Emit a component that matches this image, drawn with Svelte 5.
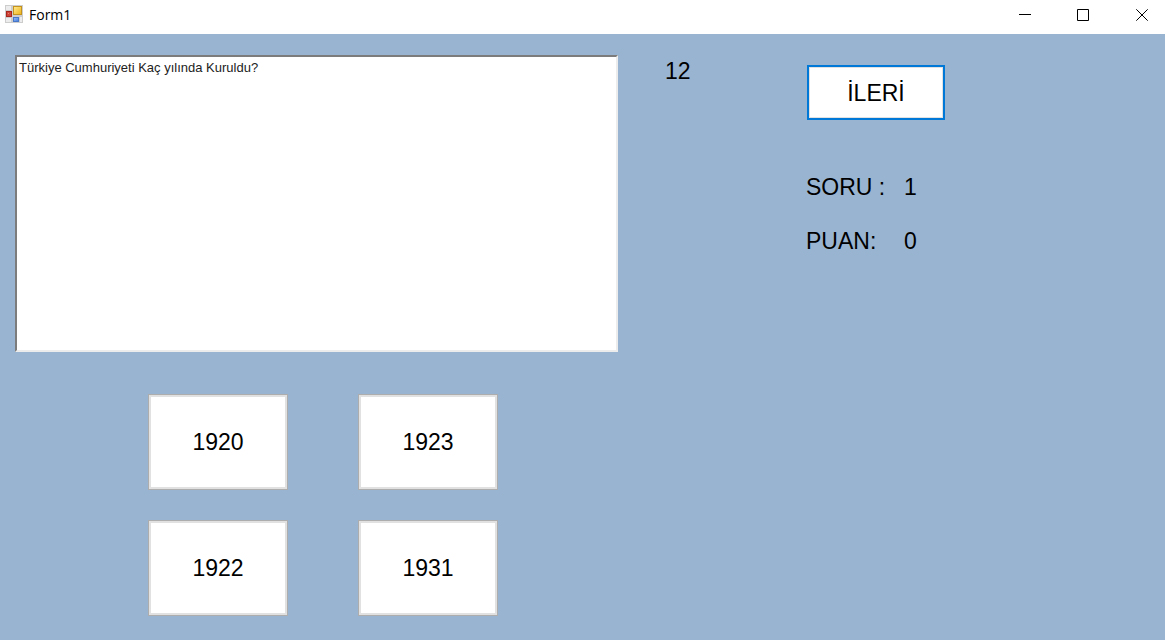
<script>
  let question = $state('Türkiye Cumhuriyeti Kaç yılında Kuruldu?');
  const answers = ['1920', '1923', '1922', '1931'];
  const remaining = 12;
  const number = 1;
  const score = 0;
</script>

<div class="window">
  <header class="titlebar">
    <svg class="app-icon" width="18" height="18" viewBox="0 0 18 18" aria-hidden="true">
      <defs>
        <linearGradient id="gold" x1="0" y1="0" x2="1" y2="1">
          <stop offset="0" stop-color="#ffe88a" />
          <stop offset="1" stop-color="#efb61d" />
        </linearGradient>
        <linearGradient id="blue" x1="0" y1="0" x2="1" y2="1">
          <stop offset="0" stop-color="#8fb9f7" />
          <stop offset="1" stop-color="#4a80e0" />
        </linearGradient>
      </defs>
      <rect x="0" y="0" width="18" height="18" fill="#cdcdcd" />
      <rect x="1" y="1" width="5" height="4" fill="#ececec" />
      <rect x="1" y="13" width="5" height="4" fill="#ececec" />
      <rect x="15" y="12" width="2" height="5" fill="#ececec" />
      <rect x="1" y="6" width="6" height="6" fill="#a8281f" />
      <rect x="2" y="7" width="4" height="4" fill="#cf4538" />
      <rect x="3" y="8" width="1" height="1" fill="#e68378" />
      <rect x="8" y="1" width="9" height="9" fill="#c4921f" />
      <rect x="9" y="2" width="7" height="7" fill="url(#gold)" />
      <rect x="8" y="12" width="6" height="5" fill="#4877c8" />
      <rect x="9" y="13" width="4" height="3" fill="url(#blue)" />
    </svg>
    <h1>Form1</h1>
    <div class="controls">
      <button type="button" aria-label="Minimize">
        <svg width="12" height="12" viewBox="0 0 12 12"><path d="M0 5.5H12" /></svg>
      </button>
      <button type="button" aria-label="Maximize">
        <svg width="12" height="12" viewBox="0 0 12 12"><path d="M.5 .5H11.5V11.5H.5Z" /></svg>
      </button>
      <button type="button" aria-label="Close">
        <svg width="12" height="12" viewBox="0 0 12 12"><path d="M.3 .3L11.7 11.7M11.7 .3L.3 11.7" /></svg>
      </button>
    </div>
  </header>

  <main>
    <section class="quiz">
      <textarea aria-label="Soru metni" spellcheck="false" bind:value={question}></textarea>
      <div class="answers">
        {#each answers as answer}
          <button type="button" class="answer">{answer}</button>
        {/each}
      </div>
    </section>
    <div class="timer">{remaining}</div>
    <aside>
      <button type="button" class="next">İLERİ</button>
      <dl>
        <dt>SORU :</dt>
        <dd>{number}</dd>
        <dt>PUAN:</dt>
        <dd>{score}</dd>
      </dl>
    </aside>
  </main>
</div>

<style>
  :global(body) {
    margin: 0;
    background: #99b4d1;
  }

  .window {
    box-sizing: border-box;
    min-height: 100vh;
    color: #000;
    font: 23px/28px 'Liberation Sans', Arial, sans-serif;
  }

  .titlebar {
    display: flex;
    align-items: center;
    height: 34px;
    background: #fff;
  }

  .app-icon {
    margin: 0 6px 6px 5px;
  }

  h1 {
    margin: 0 0 4px;
    font: 14px/20px 'Open Sans', 'Noto Sans', sans-serif;
  }

  .controls {
    display: flex;
    align-self: stretch;
    margin-left: auto;
  }

  .controls button {
    display: flex;
    justify-content: center;
    width: 58px;
    padding: 9px 0 0;
    border: 0;
    background: none;
  }

  .controls button:last-child {
    width: 46px;
    margin-left: 7px;
  }

  .controls path {
    fill: none;
    stroke: #000;
  }

  main {
    display: grid;
    grid-template-columns: 650fr 141fr 359fr;
    padding: 21px 0 24px 15px;
  }

  .quiz {
    margin-right: 47px;
  }

  textarea {
    display: block;
    box-sizing: border-box;
    width: 100%;
    height: 297px;
    padding: 2px;
    border: 2px solid;
    border-color: #7c7c7c #ececec #ececec #7c7c7c;
    outline: 0;
    resize: none;
    background: #fff;
    color: #222;
    font: 13px/18px 'Liberation Sans', Arial, sans-serif;
  }

  .answers {
    display: grid;
    grid-template-columns: 140px 140px;
    justify-content: center;
    gap: 30px 70px;
    margin: 42px 0 0 13px;
  }

  .answer,
  .next {
    box-sizing: border-box;
    padding: 0;
    background: #fff;
    color: #000;
    font: inherit;
  }

  .answer {
    height: 96px;
    border: 1px solid #adadad;
    box-shadow: inset 0 0 0 2px #e1e1e1;
  }

  .timer {
    padding-top: 2px;
  }

  .next {
    display: block;
    width: 138px;
    height: 55px;
    margin: 10px 0 0 1px;
    border: 2px solid #0078d7;
    box-shadow: inset 0 0 0 1px #e1e1e1;
  }

  dl {
    display: grid;
    grid-template-columns: 98px auto;
    justify-content: start;
    row-gap: 26px;
    margin: 53px 0 0;
  }

  dd {
    margin: 0;
  }
</style>
